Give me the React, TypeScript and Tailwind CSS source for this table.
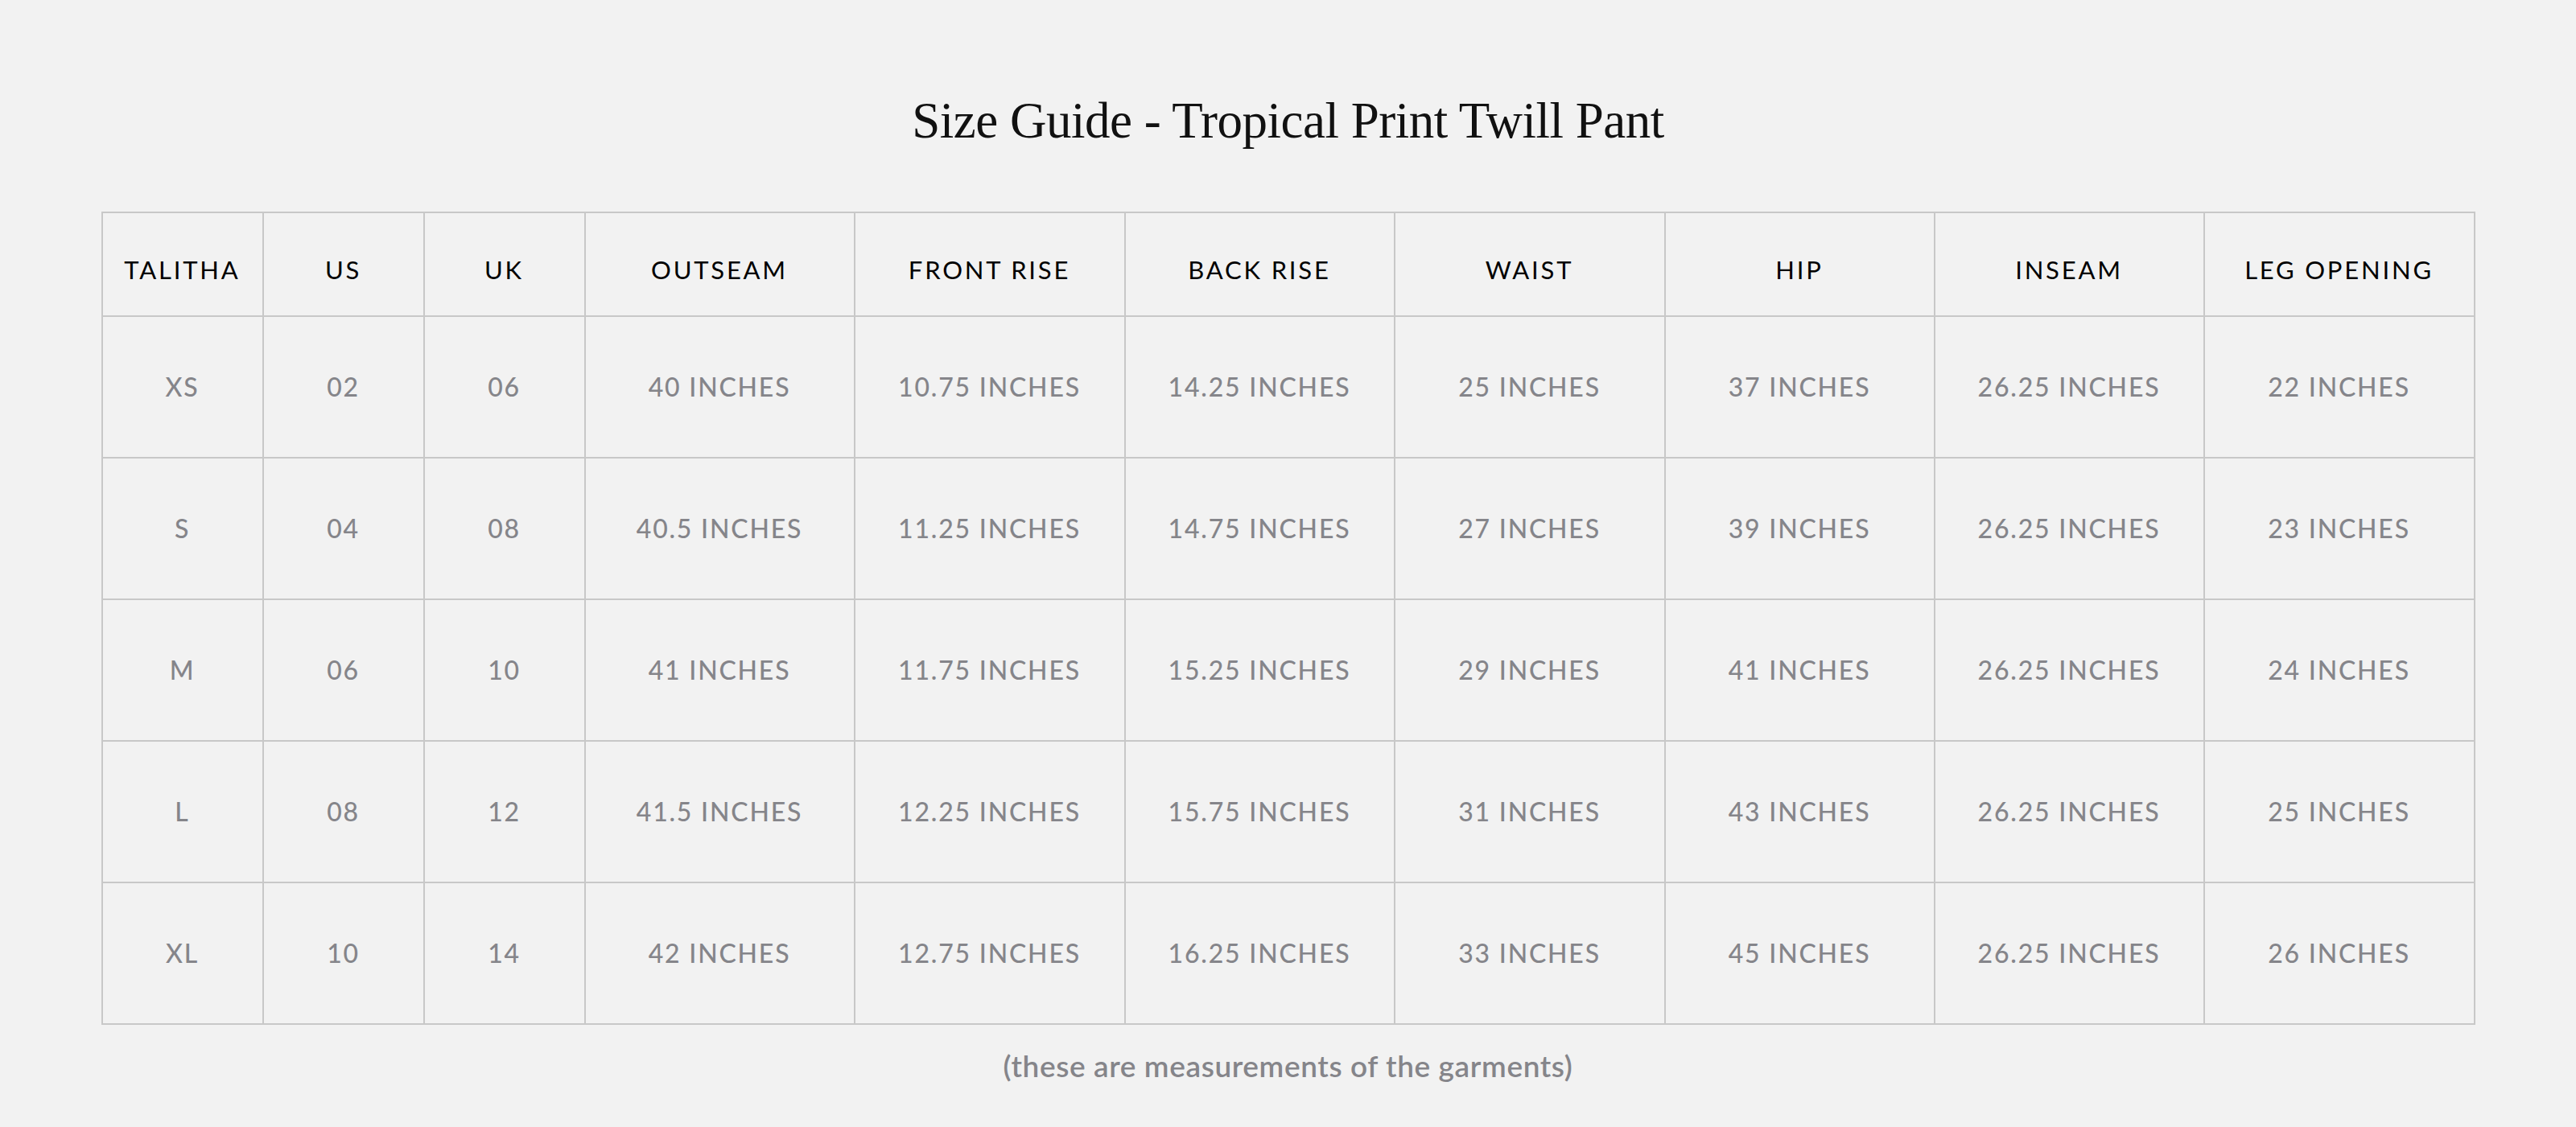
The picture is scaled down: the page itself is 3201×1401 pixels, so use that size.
import React from "react";

const headers = ["TALITHA", "US", "UK", "OUTSEAM", "FRONT RISE", "BACK RISE", "WAIST", "HIP", "INSEAM", "LEG OPENING"];

const rows: string[][] = [
  ["XS", "02", "06", "40 INCHES", "10.75 INCHES", "14.25 INCHES", "25 INCHES", "37 INCHES", "26.25 INCHES", "22 INCHES"],
  ["S", "04", "08", "40.5 INCHES", "11.25 INCHES", "14.75 INCHES", "27 INCHES", "39 INCHES", "26.25 INCHES", "23 INCHES"],
  ["M", "06", "10", "41 INCHES", "11.75 INCHES", "15.25 INCHES", "29 INCHES", "41 INCHES", "26.25 INCHES", "24 INCHES"],
  ["L", "08", "12", "41.5 INCHES", "12.25 INCHES", "15.75 INCHES", "31 INCHES", "43 INCHES", "26.25 INCHES", "25 INCHES"],
  ["XL", "10", "14", "42 INCHES", "12.75 INCHES", "16.25 INCHES", "33 INCHES", "45 INCHES", "26.25 INCHES", "26 INCHES"],
];

const widths = ["w-[200px]", "w-[200px]", "w-[200px]", "w-[335px]", "w-[336px]", "w-[335px]", "w-[336px]", "w-[335px]", "w-[335px]", "w-[336px]"];

export default function App() {
  return (
    <div className="min-h-[1401px] w-full bg-[#f2f2f2] flex flex-col items-center" style={{ fontFamily: "Lato, 'Open Sans', sans-serif" }}>
      <h1
        className="mt-[110px] text-[63px] leading-[80px] text-[#111] tracking-[-0.5px]"
        style={{ fontFamily: "'Liberation Serif', 'DejaVu Serif', serif" }}
      >
        Size Guide - Tropical Print Twill Pant
      </h1>
      <table className="mt-[73px] border-collapse border-2 border-[#c8c8c8]">
        <thead>
          <tr className="h-[129px]">
            {headers.map((h, i) => (
              <th
                key={h}
                className={`${widths[i]} border-2 border-[#c8c8c8] p-0 pt-[14px] text-center align-middle text-[31px] font-normal tracking-[2.8px] text-black`}
              >
                {h}
              </th>
            ))}
          </tr>
        </thead>
        <tbody>
          {rows.map((r) => (
            <tr key={r[0]} className="h-[176px]">
              {r.map((c, i) => (
                <td
                  key={i}
                  className="border-2 border-[#c8c8c8] p-0 text-center align-middle text-[32px] font-medium tracking-[1.8px] text-[#85858a]"
                >
                  {c}
                </td>
              ))}
            </tr>
          ))}
        </tbody>
      </table>
      <p className="mt-[29px] text-[37px] leading-[44px] font-semibold tracking-[0.6px] text-[#85858a]">
        (these are measurements of the garments)
      </p>
    </div>
  );
}
